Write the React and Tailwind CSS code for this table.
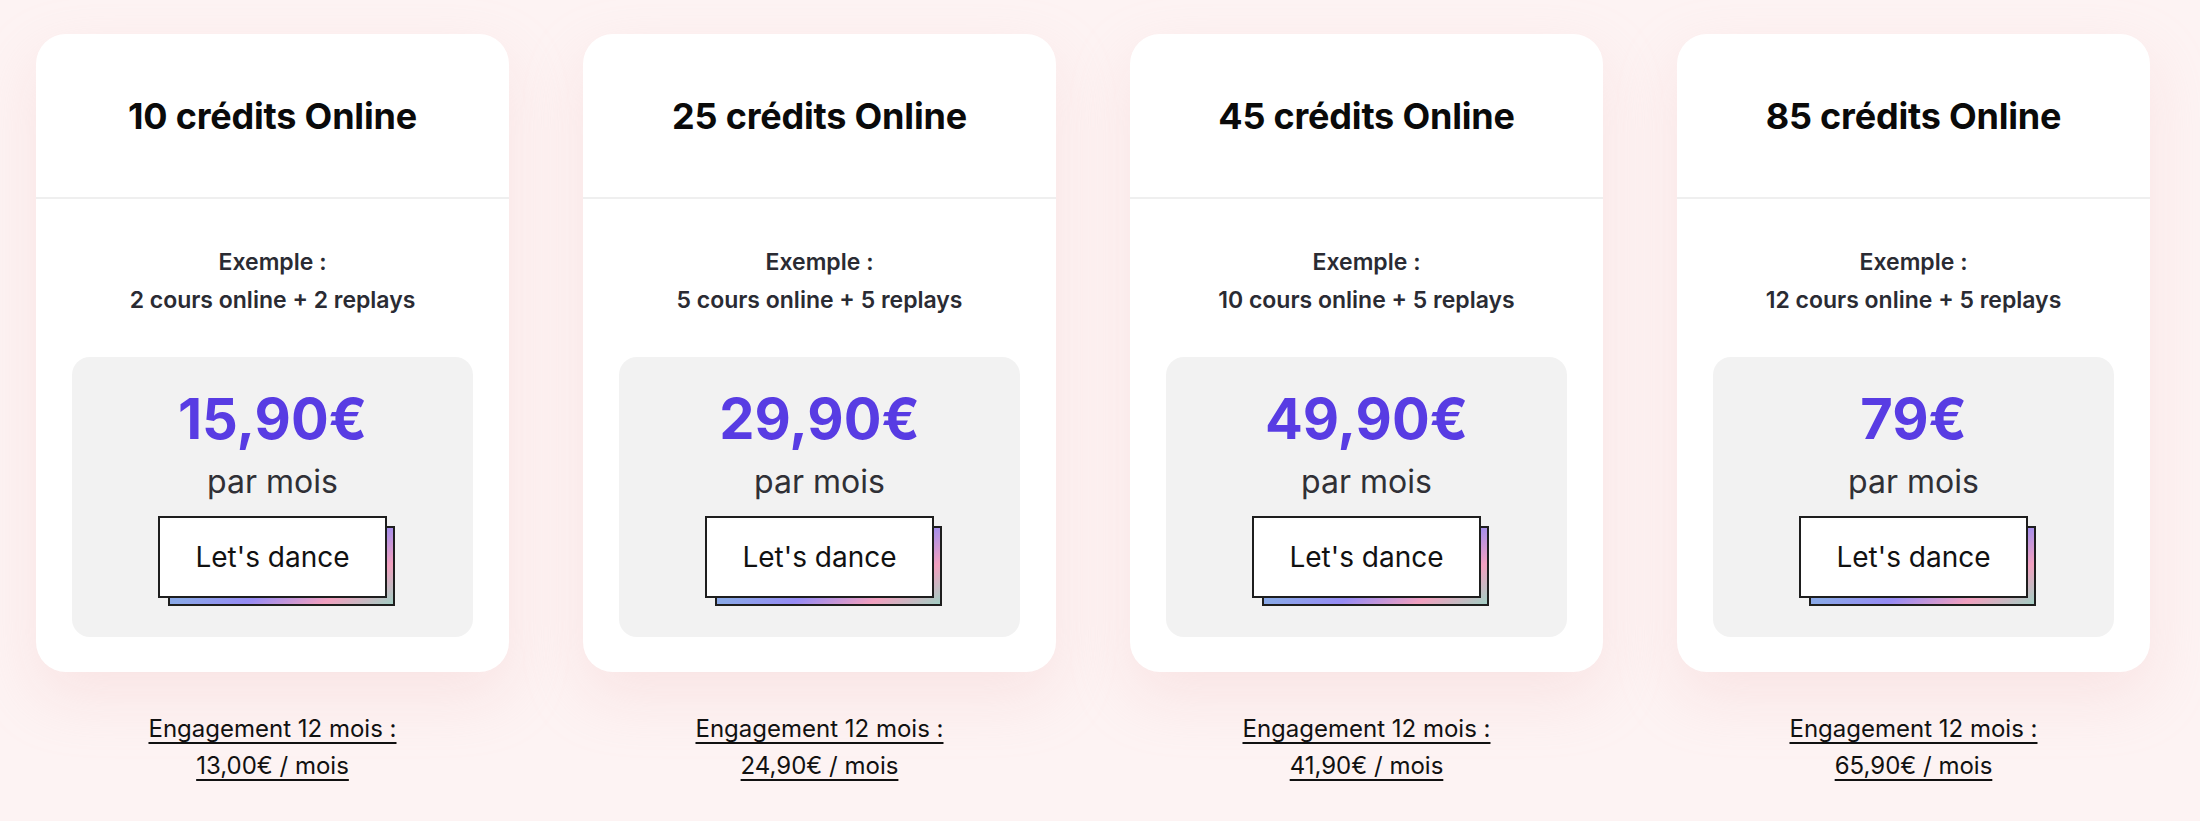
import React from 'react';

const plans = [
  { title: '10 crédits Online', example: '2 cours online + 2 replays', price: '15,90€', engagement: '13,00€ / mois' },
  { title: '25 crédits Online', example: '5 cours online + 5 replays', price: '29,90€', engagement: '24,90€ / mois' },
  { title: '45 crédits Online', example: '10 cours online + 5 replays', price: '49,90€', engagement: '41,90€ / mois' },
  { title: '85 crédits Online', example: '12 cours online + 5 replays', price: '79€', engagement: '65,90€ / mois' },
];

const DanceButton = () => (
  <a href="#" className="relative mt-[14px] block w-[229px] h-[82px]">
    <span className="absolute top-[10px] left-[10px] -right-[8px] -bottom-[8px] border-2 border-[#1e1e1e] bg-[linear-gradient(150deg,#8aa8e8_0%,#8aa8e8_38%,#968bf4_58%,#f2a0bf_80%,#a2cfc4_100%)]" />
    <span className="relative flex h-full w-full items-center justify-center border-2 border-[#1e1e1e] bg-white text-[28px] text-[#111]">
      Let's dance
    </span>
  </a>
);

const PlanCard = ({ title, example, price, engagement }) => (
  <div className="flex w-[473px] flex-col">
    <div className="rounded-[30px] bg-white shadow-[0_24px_60px_rgba(240,190,190,0.28)]">
      <div className="flex h-[165px] items-center justify-center border-b-2 border-[#efefef]">
        <h2 className="text-[36px] font-bold tracking-[-0.2px] text-[#0a0a0a]">{title}</h2>
      </div>
      <div className="px-[36px] pt-[44px] pb-[35px]">
        <p className="text-center text-[23px] font-semibold leading-[38px] text-[#2a2b33]">
          Exemple :
          <br />
          {example}
        </p>
        <div className="mt-[38px] flex flex-col items-center rounded-[18px] bg-[#f2f2f2] pt-[30px] pb-[39px]">
          <div className="text-[56px] font-bold leading-[64px] text-[#583ce3]">{price}</div>
          <div className="mt-[11px] text-[32px] leading-[40px] text-[#303036]">par mois</div>
          <DanceButton />
        </div>
      </div>
    </div>
    <a href="#" className="mt-[38px] text-center text-[24px] leading-[37px] text-[#111] underline underline-offset-[5px] decoration-[1.5px]">
      Engagement 12 mois :
      <br />
      {engagement}
    </a>
  </div>
);

export default function App() {
  return (
    <div className="min-h-screen bg-[#fdf3f3] font-['Inter','Noto_Sans',sans-serif]">
      <div className="flex gap-[74px] px-[36px] pt-[34px] pb-[40px]">
        {plans.map((p) => (
          <PlanCard key={p.title} {...p} />
        ))}
      </div>
    </div>
  );
}
